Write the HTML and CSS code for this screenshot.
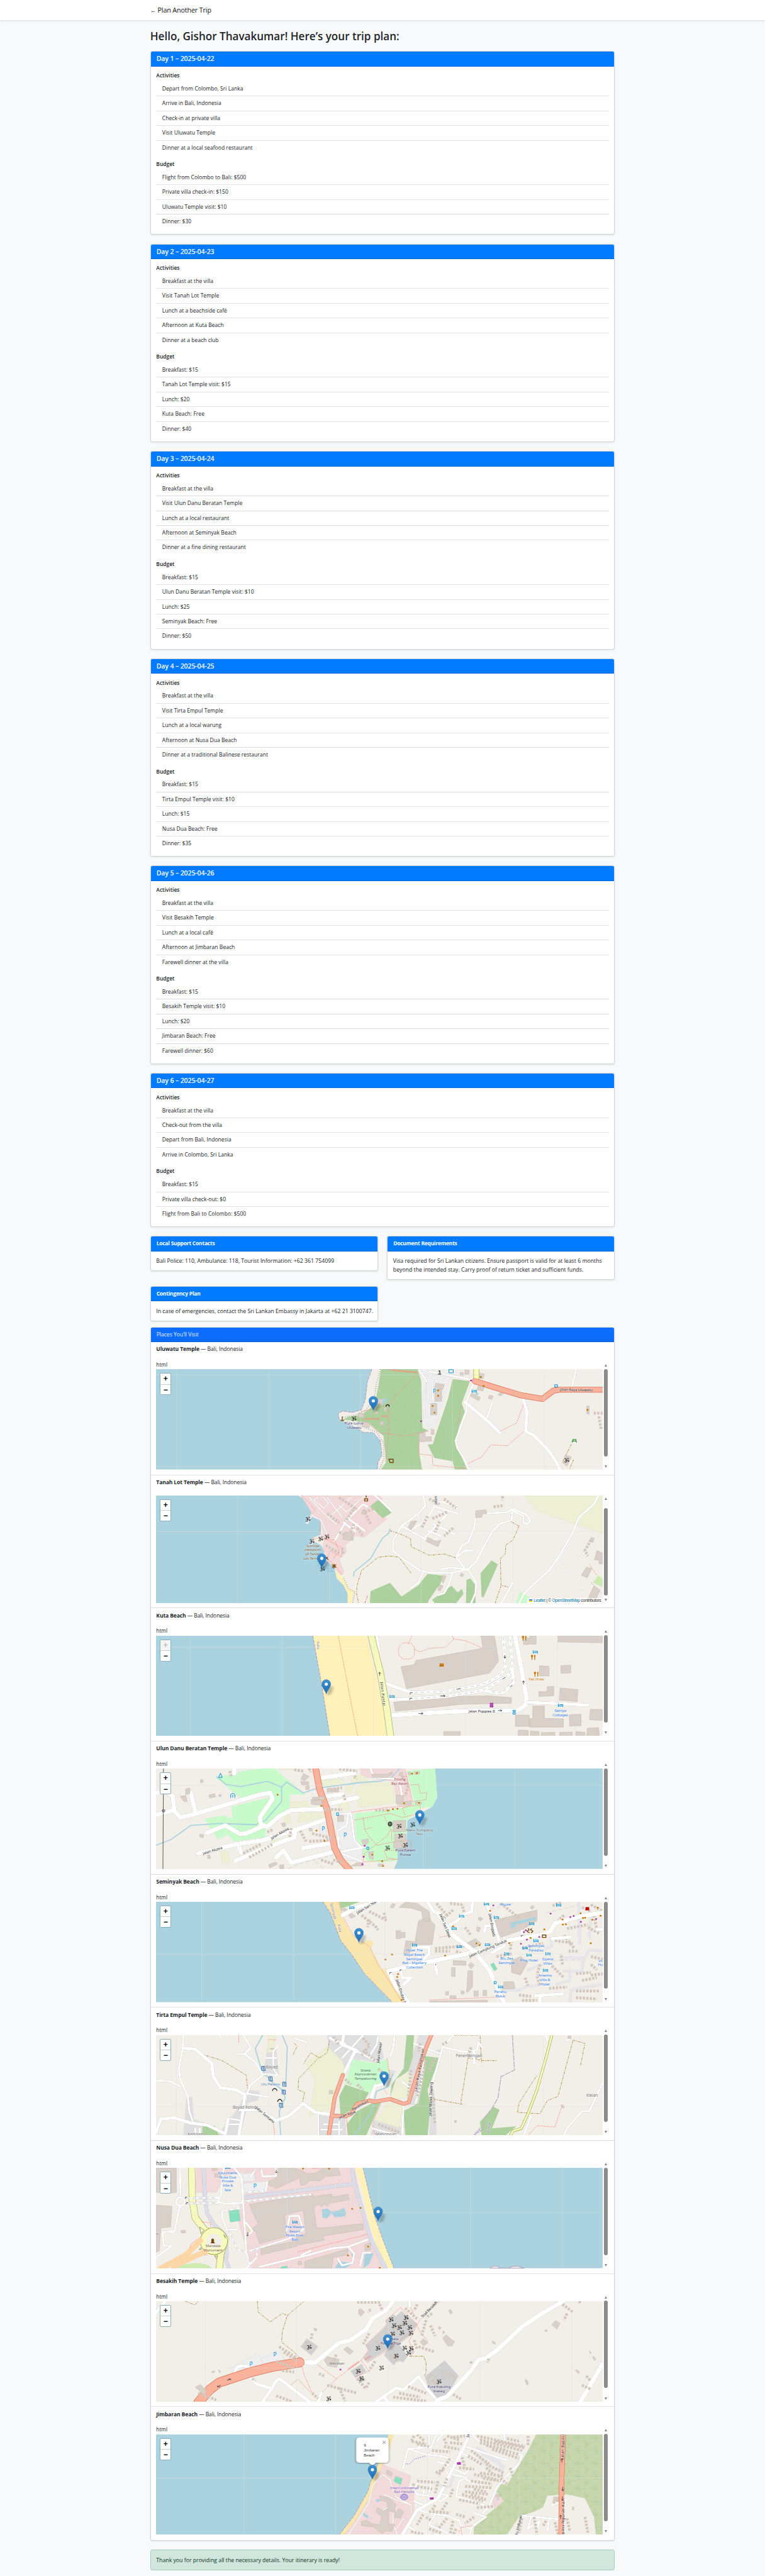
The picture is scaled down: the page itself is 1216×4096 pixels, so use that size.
FILE: index.html
```html
<!DOCTYPE html>
<html lang="en">
<head>
<meta charset="utf-8">
<title>Trip plan</title>
<link rel="stylesheet" href="styles.css">
</head>
<body>
<svg class="symbols" aria-hidden="true">
  <defs>
    <linearGradient id="pinfill" x1="0" y1="0" x2="0" y2="1"><stop offset="0" stop-color="#3f93d0"/><stop offset="1" stop-color="#1c6bb5"/></linearGradient>
    <pattern id="trees" width="62" height="150" patternUnits="userSpaceOnUse">
      <rect width="62" height="150" fill="#add19e"/>
      <path d="M10 20a4 8 0 1 1 7 0M14 22v14M21 34a3 6 0 1 1 5 0M24 34v14M40 95a4 8 0 1 1 7 0M44 97v14M51 109a3 6 0 1 1 5 0M54 109v14" fill="none" stroke="#8cbd84" stroke-width=".7"/>
    </pattern>
    <pattern id="swamp" width="58" height="96" patternUnits="userSpaceOnUse">
      <rect width="58" height="96" fill="#c8d7ab"/>
      <path d="M4 10h12M24 22h10M44 8h11M8 58h9M38 50h14M26 78h12M2 84h10M48 84h9" stroke="#62b0e6" stroke-width=".8"/>
      <path d="M12 42a5 11 0 1 1 6 0v-9M12 42h10M40 88a5 11 0 1 1 6 0v-9M40 88h10" fill="none" stroke="#8bb070" stroke-width=".9"/>
    </pattern>
    <g id="pin">
      <ellipse class="pin-shade" cx="9" cy="-24" rx="7" ry="36" transform="rotate(9)"/>
      <g transform="scale(1.33 3)"><path d="M0 0C-2-8-11-15-11-24.500A11 11 0 0 1 11-24.500C11-15 2-8 0 0Z" fill="url(#pinfill)" stroke="#2a76b4" stroke-width=".6"/><circle cy="-24" r="4" fill="#fff"/></g>
    </g>
    <g id="om"><path class="om" transform="scale(1.33 3)" d="M-5-4Q-1-6-1-2.500Q-1 0-3 0Q0 0 0 3Q-1 6.500-5.500 3.500M-1 0Q2-2 3 0Q3 4.500 5 3Q6.500 0 4-1M1-5Q3-3 5.500-5M3-6.500h.5"/></g>
    <g id="bed"><path class="bed" transform="scale(1.33 3)" d="M-5-4V4M-5 2H6V4M-2.500-1.500H6V1.500"/></g>
    <g id="fork"><path class="fork" transform="scale(1.33 3)" d="M-3.500-6V6M-5-6v4h3v-4M3.500-5V6M3-5h1v3h-1z"/></g>
    <g id="dam"><path class="dam" transform="scale(1.33 3)" d="M-5-5H4M-4-5V5M0-5V3M4-5V5M-3 5H6"/></g>
    <g id="parking"><text class="pk" transform="scale(1.33 3)" y="5">P</text></g>
  </defs>
</svg>

<nav class="topbar"><div class="wrap"><a class="brand"><span class="back">←</span> Plan Another Trip</a></div></nav>

<main class="wrap">
  <h1>Hello, Gishor Thavakumar! Here’s your trip plan:</h1>

  <section class="card day">
    <h2 class="head">Day 1 – 2025-04-22</h2>
    <div class="body">
      <h3>Activities</h3>
      <ul><li>Depart from Colombo, Sri Lanka</li><li>Arrive in Bali, Indonesia</li><li>Check-in at private villa</li><li>Visit Uluwatu Temple</li><li>Dinner at a local seafood restaurant</li></ul>
      <h3>Budget</h3>
      <ul><li>Flight from Colombo to Bali: $500</li><li>Private villa check-in: $150</li><li>Uluwatu Temple visit: $10</li><li>Dinner: $30</li></ul>
    </div>
  </section>
  <section class="card day">
    <h2 class="head">Day 2 – 2025-04-23</h2>
    <div class="body">
      <h3>Activities</h3>
      <ul><li>Breakfast at the villa</li><li>Visit Tanah Lot Temple</li><li>Lunch at a beachside café</li><li>Afternoon at Kuta Beach</li><li>Dinner at a beach club</li></ul>
      <h3>Budget</h3>
      <ul><li>Breakfast: $15</li><li>Tanah Lot Temple visit: $15</li><li>Lunch: $20</li><li>Kuta Beach: Free</li><li>Dinner: $40</li></ul>
    </div>
  </section>
  <section class="card day">
    <h2 class="head">Day 3 – 2025-04-24</h2>
    <div class="body">
      <h3>Activities</h3>
      <ul><li>Breakfast at the villa</li><li>Visit Ulun Danu Beratan Temple</li><li>Lunch at a local restaurant</li><li>Afternoon at Seminyak Beach</li><li>Dinner at a fine dining restaurant</li></ul>
      <h3>Budget</h3>
      <ul><li>Breakfast: $15</li><li>Ulun Danu Beratan Temple visit: $10</li><li>Lunch: $25</li><li>Seminyak Beach: Free</li><li>Dinner: $50</li></ul>
    </div>
  </section>
  <section class="card day">
    <h2 class="head">Day 4 – 2025-04-25</h2>
    <div class="body">
      <h3>Activities</h3>
      <ul><li>Breakfast at the villa</li><li>Visit Tirta Empul Temple</li><li>Lunch at a local warung</li><li>Afternoon at Nusa Dua Beach</li><li>Dinner at a traditional Balinese restaurant</li></ul>
      <h3>Budget</h3>
      <ul><li>Breakfast: $15</li><li>Tirta Empul Temple visit: $10</li><li>Lunch: $15</li><li>Nusa Dua Beach: Free</li><li>Dinner: $35</li></ul>
    </div>
  </section>
  <section class="card day">
    <h2 class="head">Day 5 – 2025-04-26</h2>
    <div class="body">
      <h3>Activities</h3>
      <ul><li>Breakfast at the villa</li><li>Visit Besakih Temple</li><li>Lunch at a local café</li><li>Afternoon at Jimbaran Beach</li><li>Farewell dinner at the villa</li></ul>
      <h3>Budget</h3>
      <ul><li>Breakfast: $15</li><li>Besakih Temple visit: $10</li><li>Lunch: $20</li><li>Jimbaran Beach: Free</li><li>Farewell dinner: $60</li></ul>
    </div>
  </section>
  <section class="card day">
    <h2 class="head">Day 6 – 2025-04-27</h2>
    <div class="body">
      <h3>Activities</h3>
      <ul><li>Breakfast at the villa</li><li>Check-out from the villa</li><li>Depart from Bali, Indonesia</li><li>Arrive in Colombo, Sri Lanka</li></ul>
      <h3>Budget</h3>
      <ul><li>Breakfast: $15</li><li>Private villa check-out: $0</li><li>Flight from Bali to Colombo: $500</li></ul>
    </div>
  </section>

  <div class="info">
    <section class="card note"><h2 class="head">Local Support Contacts</h2><p>Bali Police: 110, Ambulance: 118, Tourist Information: +62 361 754099</p></section>
    <section class="card note"><h2 class="head">Document Requirements</h2><p>Visa required for Sri Lankan citizens. Ensure passport is valid for at least 6 months<br>beyond the intended stay. Carry proof of return ticket and sufficient funds.</p></section>
    <section class="card note"><h2 class="head">Contingency Plan</h2><p>In case of emergencies, contact the Sri Lankan Embassy in Jakarta at +62 21 3100747.</p></section>
  </div>

  <section class="card places">
    <div class="head">Places You’ll Visit</div>

    <article class="place">
      <p class="name"><b>Uluwatu Temple</b> — Bali, Indonesia</p>
      <div class="frame"><div class="doc"><p>html</p><div class="map">
        <svg viewBox="29 0 1490 756" preserveAspectRatio="none">
          <g transform="translate(29 0) scale(1.017 1.2253) translate(-42 -929)">
            <path class="water" d="M42 929H750L735 1010 728 1120 715 1180 685 1195 655 1187 640 1200 642 1235 665 1262 700 1290 722 1318 755 1320 778 1370 783 1460 770 1500 768 1546H42Z"/>
            <path class="coast" d="M750 929L735 1010 728 1120 715 1180 685 1195 655 1187 640 1200 642 1235 665 1262 700 1290 722 1318 755 1320 778 1370 783 1460 770 1500 768 1546"/>
            <path class="cliff" d="M778 929L765 1020 758 1110 730 1180 700 1210 655 1225M670 1250L730 1290 765 1315 788 1380 790 1480 775 1546"/>
            <path class="wood" d="M780 929H900L912 1000 916 1290 935 1305 905 1330 905 1440 915 1546H780L797 1500 788 1340 745 1270 690 1245 655 1240 672 1222 712 1212 745 1170 765 1100Z"/>
            <path class="wood" d="M1015 990L1072 1002 1045 1140 1055 1190 1035 1290 1025 1400 1045 1470 1062 1546H1022L1015 1495 955 1475 933 1393 950 1390 960 1330 1000 1110Z"/>
            <path class="lot" d="M900 929L930 1010 922 1240 940 1300 960 1270 1000 1010 1010 980 940 950 960 929Z"/>
            <path class="road w2" d="M925 1000L922 1240 935 1295 958 1270 998 1010 950 1000 948 1130 925 1135M915 929L945 960 930 1010"/>
            <path class="road w4" d="M905 935L930 1005M940 945L1080 995M1145 1135L1126 1240M1420 929L1407 1035M1085 1010L1060 1130 1060 1190 1040 1290 1025 1370 1030 1410 1055 1490 1068 1546"/>
            <path class="road w6" d="M1055 1130L1130 1248 1170 1320M1245 1105L1259 1190 1255 1312 1280 1335 1330 1430 1355 1500 1367 1546"/>
            <path class="second-case" d="M1093 929V1000"/><path class="second" d="M1093 929V1000"/>
            <path class="trunk-case" d="M1088 1003L1160 1045 1240 1090 1310 1112 1345 1062 1365 1055H1520"/>
            <path class="trunk" d="M1088 1003L1160 1045 1240 1090 1310 1112 1345 1062 1365 1055H1520"/>
            <path class="foot" d="M790 929L900 950M900 955L835 1080 805 1150 715 1190 720 1240 775 1320 860 1340 935 1310M805 1150V1310L795 1500M1043 1150L1030 1280M1247 1150L1225 1260 1172 1310M1247 1315L1195 1400 1140 1395 1110 1470 1065 1510M905 1330V1450L948 1460 950 1520 1060 1540"/>
            <path class="foot wide" d="M815 935L900 950M728 1235H775M780 1218H803"/>
            <path class="track" d="M1405 1390L1375 1500M1412 1485L1398 1546"/>
            <path class="bld" d="M765 1110l25 5-4 35-20-5zM960 1015l28 10-5 28-28-12zM957 1052h22v75h-22zM943 1140h20v70h-20zM905 1320h20v55h-20zM928 1345h18v28h-18zM777 1250h12v22h-12zM705 1200l20 5-3 25-18-5zM715 1250l28 10-2 30-22-10zM945 1300h9v30h-9zM1078 1075l28 28-5 20-28-28zM1100 1030l20 8-6 25-20-8zM1135 1090l13 4-4 20-12-4zM1170 1072l12 5-8 16-10-5zM1055 935h14v25h-14zM1040 950h10v18h-10zM1105 955l14 4-4 30-12-4zM1455 1155l8 2v50l-8-5zM1385 1455l20 15-15 55-14-20zM760 1185h10v20h-10zM790 1165h8v22h-8z"/>
            <path class="brow" d="M1478 1200L1507 1200M1495 1220L1502 1300"/>
            <path class="pool" d="M788 1110l12-2-4 30-12 2zM1090 1075h10v12h-10z"/>
            <path class="poi" d="M967 1060h1M967 1093h1M949 1155h1M955 1197h1M1107 978h1M1116 1033h1M1457 1180h1"/>
            <path class="poi shop" d="M1075 999h1M911 1249h1"/>
            <path class="bluebox" d="M1003 932h14v20h-14zM1350 1025h9v14h-9z"/>
            <path class="darkpoi" d="M969 940h4v20M966 960h12M797 1160v-8l5-5 5 5v8"/>
            <path class="brownpoi" d="M648 1244h11M653 1220v20M806 1483h14v20h-10z"/>
            <path class="greenpoi" d="M1408 1361h13M1411 1361l-4 20M1418 1361l4 20M1406 1371h16"/>
            <path class="grid" d="M110 929V1546M412 929V1546M713 929V1546M1014 929V1546M1315 929V1546M42 964H1507M42 1528H1507"/>
            <text class="lb temple" transform="translate(692 1271) scale(1.31 2.450)">Pura Luhur<tspan x="0" dy="10.700">Uluwatu</tspan></text>
            <text class="lb" transform="translate(1420 1064) scale(1.31 2.450) rotate(1)">Jalan Raya Uluwatu</text>
            <text class="lb blue big" transform="translate(955 1074) scale(1.31 2.450)">P</text>
          </g>
          <use href="#bed" x="1090" y="165"/><use href="#om" x="689" y="374"/><use href="#om" x="1399" y="687"/><use href="#pin" x="754" y="311"/>
        </svg>
        <div class="zoomctl"><span>+</span><span>−</span></div></div></div>
        <div class="bar"><i class="up"></i><i class="thumb"></i><i class="down"></i></div></div>
    </article>

    <article class="place scrolled">
      <p class="name"><b>Tanah Lot Temple</b> — Bali, Indonesia</p>
      <div class="frame"><div class="doc"><div class="map">
        <svg viewBox="29 225 1490 813" preserveAspectRatio="none">
          <path class="water" d="M29 225H503L530 260 545 310 550 350 528 435 535 440 552 375 575 410 580 460 578 520 550 545 545 600 560 575 580 600 590 640 590 700 625 770 632 850 655 900 668 960 675 1038H29Z"/>
          <path class="res" d="M512 225H775L785 250 740 330 800 400 722 542 695 525 660 600 665 650 640 700 655 800 648 825 622 770 600 690 585 620 590 560 580 410 550 360Z"/>
          <path class="sand" d="M624 780L650 840 662 880 672 930 690 935 680 1038H668L668 960 655 900 635 850Z"/>
          <path class="cliff" d="M655 850L672 930 692 950 685 1038"/>
          <path class="farm" d="M1258 225H1519V510L1300 340Z"/>
          <path class="wood" d="M772 255L815 355 785 395 743 305ZM745 945L810 882 848 985 905 900 935 815 985 828 980 880 940 1010 935 1038H742ZM950 1010L1015 905 1035 955 1050 928 1055 965 1030 1038H960ZM1065 860L1078 850 1095 900V1038H1063ZM1112 810L1148 714 1170 742 1122 990 1115 990Z"/>
          <path class="park" d="M1245 945L1285 1010V1038H1228Z"/><path class="golf" d="M1505 825L1519 850V915L1487 880Z"/>
          <path class="stream" d="M810 475L805 510 785 545 765 620 745 700 690 800 688 835"/>
          <path class="road w2" d="M540 240L585 350 630 440M570 240L555 260 590 320 605 280 585 235M600 240L650 390M545 375L580 410 600 520M605 390L680 240M640 300L665 350 725 225M1360 700L1440 850 1450 1038M1370 720L1420 540 1475 620 1440 700 1455 710 1480 625 1519 640"/>
          <path class="road w4" d="M760 225L815 340M625 565L665 410 720 290 735 310M672 400L725 490M655 430L695 495M700 440L680 470M920 225L928 300 905 360 850 450 820 560 820 640 850 700 910 790 940 805 1015 808 1070 780 1098 720 1120 620 1150 500 1175 440 1215 410 1220 325M850 455L920 545 965 600M965 225L955 320 930 410 880 485M950 270L990 275 1035 325M960 310L1035 360M970 345L1000 365 925 545M955 440L1025 515M935 490L980 530M960 590L950 560 968 545M1135 360L1200 350 1220 325 1265 370 1278 415 1268 440 1255 430V380L1215 335M1095 400L1090 470 1070 580 1050 600 1030 690 1058 770M1030 690L1060 640 1085 638M980 780L1010 768 1065 780M920 800L905 880 880 920M1018 810L1005 900 990 960 970 975M1070 780L1097 880 1095 960 1080 1038M1220 880L1200 960 1180 1038M1505 225L1490 290 1440 390 1420 500 1380 660 1340 790 1290 890 1255 970 1240 1038"/>
          <path class="track" d="M810 490L850 520 878 550 880 610 940 675 990 665 1030 695M1240 455L1212 420M1240 455L1220 560 1195 600V660L1178 700 1180 900 1205 915M1180 905L1160 1038M880 810L840 690 805 680 770 690 715 790 700 900 698 960 705 1038M735 980L725 1038"/>
          <path class="foot" d="M515 225L545 290 560 340 535 400M578 420L575 510 600 560 650 620 648 690 610 640 600 700 630 760 648 820M550 545L625 560 640 640 620 700M1475 740L1500 830M1480 880L1515 960"/>
          <path class="brow" d="M695 310L660 420M640 240L700 330M720 330L745 440M715 360L760 320M690 440L665 560M640 500L690 560M700 470L720 530M595 600L640 660M650 620L655 670M940 250L975 290M990 250L1030 320M935 380L915 470M975 420L960 500M1000 350L950 400M1020 470L990 530M1185 230V260M1155 310L1190 300M600 360L640 430M1480 560L1460 640 1470 680"/>
          <path class="bld" d="M1095 340L1130 332 1132 362 1118 360 1116 388 1096 392ZM880 420l20-5-20 70-10-20zM935 540L965 570 980 560 970 610 930 570ZM660 500l30 10-10 55-28-12zM985 825l12 5-10 55-5-20zM975 895l12 10-10 40-8-8zM1500 640l19 20v80h-12v-30h-15zM1465 765l18 10-15 70-20-20zM1490 905l20 30-15 80-25-10zM1048 808l8 10-5 20-8-10zM1480 540l12 8-5 30-10-8z"/>
          <path class="brownpoi" d="M725 250h10v16h-10zM730 225v15M616 745l14 22M630 745l-14 22M623 740v35M596 690l8 20M590 705l12-15"/>
          <path class="ripple" d="M565 720H590M570 740H600M565 755H615M575 775H620M600 795H625"/>
          <path class="grid" d="M301 225V1038M608 225V1038M913 225V1038M1220 225V1038M29 496H1519"/>
          <text class="lb" transform="translate(966 260) scale(1.33 3) rotate(-88)">Jalan</text>
          <text class="lb brown" transform="translate(552 612) scale(1.33 3)">Sunrise<tspan x="0" dy="10.700">viewpoint</tspan><tspan x="0" dy="10.700">of Tanah</tspan><tspan x="0" dy="10.700">Lot Temple</tspan></text>
          <use href="#om" x="536" y="405"/><use href="#om" x="599" y="537"/><use href="#om" x="578" y="552"/><use href="#om" x="549" y="571"/><use href="#om" x="584" y="779"/><use href="#pin" x="582" y="770"/>
        </svg>
        <div class="zoomctl"><span>+</span><span>−</span></div>
        <div class="credit"><i></i><a>Leaflet</a> | © <a>OpenStreetMap</a> contributors</div></div></div>
        <div class="bar"><i class="up"></i><i class="thumb"></i><i class="down"></i></div></div>
    </article>

    <article class="place">
      <p class="name"><b>Kuta Beach</b> — Bali, Indonesia</p>
      <div class="frame"><div class="doc"><p>html</p><div class="map">
        <svg viewBox="29 234 1490 756" preserveAspectRatio="none">
          <path class="water" d="M29 234H552L575 520 590 720 609 990H29Z"/>
          <path class="sand" d="M552 234H730L760 500 785 760 797 990H609L590 720 575 520Z"/>
          <path class="coast" d="M552 234L575 520 590 720 609 990"/>
          <path class="foot" d="M637 234L658 480 680 740 702 990M883 234L870 300M1018 234L1022 260 995 320 940 330 910 355 890 335M1022 258L1060 270 1120 327M865 285Q892 290 892 350T865 410T838 350T865 285"/>
          <path class="bld" d="M1113 234H1158L1172 425 1142 515 865 632 846 467 890 452 896 420 1120 327ZM822 735L1040 690 1140 686 1215 700V742L1050 750 828 803ZM1370 234H1519V287L1370 280ZM1275 234H1297V297H1275ZM1255 250h17v50h-17zM1308 460l32 4v72h-32zM1380 458l33-2v58l-33 2zM1334 618l22-3v70l-50 6v-36h28zM1377 627l60 13-3 90-60-12zM1286 763h39v92l63 5v62H1275v-65h11zM1228 832h46v84h-46zM1408 828l39-3v86l-38 3zM1478 787l41 3v82l-44-6zM1468 930l38-3 2 63h-42zM1238 943l33 4v43h-34zM1278 952l29 4v34h-29zM1315 963l45-2v29h-47zM1376 961l42-2v31h-43zM1430 955l30 6v29h-31zM989 955h55v35h-55z"/>
          <path class="road w6" d="M798 595L880 662 990 655 1120 600 1180 530 1195 460 1187 234M810 715L880 710 1000 690 1120 645 1205 530 1218 460 1210 234M1218 480L1222 590 1185 665 1150 660 1118 640M765 234L772 340"/>
          <path class="dash-lane" d="M890 662L990 655 1120 600 1180 530 1195 460 1187 234M890 708L1000 690 1120 645 1205 530 1218 460 1210 234M1222 560L1185 665 1140 655"/>
          <path class="road w9" d="M1227 234L1245 450 1265 700 1262 755 1235 795 1050 802 930 815 820 832"/>
          <path class="road w6" d="M1268 735L1370 745 1470 756"/>
          <path class="second-case w11" d="M746 225L778 520 800 800 812 1000"/><path class="second w10" d="M746 225L778 520 800 800 812 1000"/>
          <path class="arrow" d="M775 535V510M771 520l4-12 4 12M1193 380v22M1189 392l4 12 4-12M1255 600v-25M1251 585l4-12 4 12M1045 632l-14 5M1185 560l10-12M1210 620l8-14M978 687h14M988 680l6 7-6 7M905 820h14M914 812l6 7-6 8M877 675v-12h8M876 717v-12h8"/>
          <path class="burger" d="M975 446h14M975 454h14M975 462h14"/>
          <path class="poi shop" d="M1145 745h1M1151 745h1M1145 757h1M1151 757h1M1145 768h1M1151 768h1"/>
          <use href="#fork" x="1258" y="253"/><use href="#fork" x="1288" y="397"/><use href="#fork" x="1298" y="524"/><use href="#bed" x="1294" y="355"/><use href="#bed" x="816" y="690"/><use href="#bed" x="1378" y="757"/>
          <path class="bluebox" d="M1220 795h8v10h-8zM1220 812h8v12h-8z"/>
          <path class="grid" d="M144 234V990M449 234V990M756 234V990M1062 234V990M1368 234V990M29 320H1519"/>
          <text class="lb admin" transform="translate(566 307) scale(1.33 3) rotate(86)">Kuta</text>
          <text class="lb spaced" transform="translate(782 675) scale(1.33 3) rotate(84)">Jalan Pantai</text>
          <text class="lb" transform="translate(1116 811) scale(1.33 3)">Jalan Poppies II</text>
          <path class="arrow" d="M1170 797h12M1178 790l5 7-5 7"/>
          <text class="lb food" transform="translate(1298 572) scale(1.33 3)">Fat chow</text>
          <text class="lb hotel" transform="translate(1378 807) scale(1.33 3)">Satriya<tspan x="0" dy="10.700">Cottages</tspan></text>
          <use href="#pin" x="597" y="671"/>
        </svg>
        <div class="zoomctl maxed"><span>+</span><span>−</span></div></div></div>
        <div class="bar"><i class="up"></i><i class="thumb"></i><i class="down"></i></div></div>
    </article>

    <article class="place">
      <p class="name"><b>Ulun Danu Beratan Temple</b> — Bali, Indonesia</p>
      <div class="frame"><div class="doc"><p>html</p><div class="map">
        <svg viewBox="29 231 1490 756" preserveAspectRatio="none">
          <path class="water" d="M960 231H1519V987H823L835 925V830L865 780 868 620 895 590 950 520 967 450Z"/>
          <path class="park" d="M425 231L470 320 528 430 475 425V530L445 600 395 650V750L290 780 270 730 235 765 190 610 255 585 285 610 280 520 350 480 405 450 400 420 310 450 228 300 320 250 385 231ZM865 250L960 231 967 450 950 520 910 530 865 620V770L835 830V925L780 940 735 930 700 840 690 570 850 530 890 480Z"/>
          <path class="res" d="M710 231H860L885 510 835 512 822 330 715 290Z"/>
          <path class="farm" d="M580 320L655 310V350L585 375ZM710 350L760 335 820 345 825 490 705 525 695 400ZM665 360L690 350 680 420 660 410ZM685 285L720 280 740 325 680 335ZM510 565H590V600L500 640ZM478 485L535 475 540 520 480 530ZM440 231H495V240H440ZM245 855H270L275 940 250 945ZM455 590L475 580 480 650 460 640ZM415 745L440 750 435 790 412 795ZM640 480L670 470 675 540 640 540Z"/>
          <path class="lot" d="M575 630L598 620V735H575ZM635 570L685 565 695 760 720 830 715 930 655 920 635 780Z"/>
          <path class="stream" d="M230 290L262 350 310 368 400 328 448 370 465 333 520 415 560 385 600 370 700 340 780 325 815 300 842 231M448 370V480L395 620 360 655 240 645 145 660 80 765 29 810"/>
          <path class="road w9" d="M29 415L60 405 85 440 90 550 110 600 150 580 380 425 410 415 418 460 375 600 380 660 400 670 440 590 480 545 590 535M29 580L90 545M170 870L300 800 380 775 500 690 600 610M200 715L260 660 310 725 330 720 390 660M295 925L400 825 490 750 495 690M520 830L620 790M430 900L455 850 480 940 620 860M600 500L700 450M600 440L650 425M585 300L690 265M145 415L160 560M290 231V270M305 810L312 865"/>
          <path class="road w4" d="M745 231L755 300 835 310 845 370 850 445M625 575L680 570 690 760M640 860L635 700 665 660 670 580M645 870L715 930M660 850L730 820M690 770L715 830 645 860"/>
          <path class="dash-lane" d="M470 985L520 940 620 885M560 930L590 987"/>
          <path class="trunk-case w10" d="M561 225L575 390 600 540 625 830 645 920 675 995"/><path class="trunk w9" d="M561 225L575 390 600 540 625 830 645 920 675 995"/>
          <path class="foot" d="M680 560L800 525 910 508 912 540 890 580 850 600 810 570 690 620M720 600L725 690 740 745 765 810 830 780 880 775V840L790 850 800 905 835 915 720 935 725 870 770 790 800 740 812 690 790 590M725 690L750 675M815 690L815 770M860 580L850 530 875 515M862 260L885 480 930 465 933 415 910 415 905 350 875 355M855 290H870"/>
          <path class="bld" d="M820 625l42-5v85l-42 5zM825 725h38v50h-38zM822 782h28v50h-28zM852 785h16v45h-16zM205 430l20-8 3 22-20 10zM240 425l8 5-4 15-6-5zM110 440l18-5 5 45-12-2zM128 385l14-5v40l-14 8zM178 315h8v22h-8zM748 275l50 0 20-20 0 20-20 25h-45zM520 270l20 20-15 35-12-10zM510 330h28v25h-22zM528 365l12-5v30h-12zM600 380l35 5 5 20-40 5zM550 450l40-10v25l-35 8zM545 465h35l5 45-38-10zM175 725l12 5v22l-12-5zM447 645l12-5 3 25-10 5zM200 885l8-3 3 25-9 3zM405 955l25-20 3 18-25 28zM440 960l15-5v30h-12zM540 680l10 3v22l-10-3zM635 585h20v45h-20zM840 265l12-5v30l-12-5zM858 480l22-5v25l-22 5zM830 430l25 5v70l-25-10zM895 482l20 3v15h-20zM870 262h12v15h-12zM890 257l18-4v20l-15 4zM715 770l22-10v30l-15 30zM738 860l16-5v60l-12-5zM700 940h20v25h-40zM770 950h18v18h-18z"/>
          <path class="brow" d="M490 240L520 250M540 231L545 260M640 235L700 250M655 430L660 470M610 390L650 375M590 540H650M760 545H810M320 870L380 800M340 900L420 800M400 710L420 690M480 680L475 750M510 700L530 780M550 720L620 760M540 780L610 770M275 250L280 290M690 290L700 310M870 360L860 440M620 920L650 940M580 920L620 950M850 290L865 340"/>
          <path class="poi" d="M434 429h1M580 513h1M564 699h1M591 777h1M883 270h1M899 266h1M906 490h1M856 493h1M803 548h1M819 537h1M834 534h1M750 880h1M783 929h1M786 965h1"/>
          <path class="poi shop" d="M725 814h1M721 896h1M717 953h1"/>
          <path class="bluebox" d="M631 566h7v18h-7zM732 823h7v17h-7z"/>
          <path class="bed" d="M238 298l6-32 6 32zM278 452v-25l7-10 7 10v25M285 430v20"/>
          <path class="arrow" d="M54 231L52 987M50 543h8v14h-8z"/>
          <ellipse class="wheel" cx="810" cy="649" rx="6" ry="15"/>
          <path class="wheel" d="M804 649H816M810 634V664"/>
          <path class="grid" d="M307 231V987M613 231V987M920 231V987M1226 231V987M29 358H1519"/>
          <text class="lb" transform="translate(444 728) scale(1.33 3) rotate(-30)">Jalan Akasia</text>
          <text class="lb" transform="translate(219 858) scale(1.33 3) rotate(-17)">Jalan Akasia</text>
          <text class="lb resort" transform="translate(842 321) scale(1.33 3)">Enjung<tspan x="0" dy="10.700">Beji Resort</tspan></text>
          <text class="lb grey" transform="translate(908 704) scale(1.33 3)">Meru Tumpang<tspan x="0" dy="10.500">Telu</tspan></text>
          <text class="lb temple" transform="translate(861 858) scale(1.33 3)">Pura Dalem<tspan x="0" dy="10.700">Purwa</tspan></text>
          <use href="#parking" x="587" y="685"/><use href="#parking" x="660" y="730"/>
          <use href="#om" x="840" y="667"/><use href="#om" x="885" y="656"/><use href="#om" x="844" y="740"/><use href="#om" x="861" y="809"/><use href="#om" x="801" y="831"/><use href="#pin" x="909" y="653"/>
        </svg>
        <div class="zoomctl"><span>+</span><span>−</span></div></div></div>
        <div class="bar"><i class="up"></i><i class="thumb"></i><i class="down"></i></div></div>
    </article>

    <article class="place">
      <p class="name"><b>Seminyak Beach</b> — Bali, Indonesia</p>
      <div class="frame"><div class="doc"><p>html</p><div class="map">
        <svg viewBox="29 228 1490 756" preserveAspectRatio="none">
          <path class="water" d="M29 228H586L610 310 645 520 680 620 725 770 817 984H29Z"/>
          <path class="sand2" d="M586 228H638L650 340 680 460 710 540 745 515 755 540 745 580 765 660 780 735 797 730 805 790 860 984H817L725 770 680 620 645 520 610 310Z"/>
          <path class="coast" d="M586 228L610 310 645 520 680 620 725 770 817 984"/>
          <path class="wood" d="M640 228H710L645 280Z"/>
          <path class="foot" d="M637 228L655 350 690 490 742 565 770 700 800 800 850 984M975 495L1010 483M940 968L1170 945"/>
          <path class="greyroad" d="M1160 890L1240 895 1260 870 1320 850M1410 984L1415 890 1519 850M1380 650L1460 650 1475 590 1519 600M1330 580L1350 560 1345 500M1480 350L1475 500M1365 850L1410 820V740M1440 240L1443 540M1270 740L1320 700M1390 750H1450L1455 650"/>
          <path class="dash-lane" d="M1330 310L1440 255M1350 672L1450 665M1145 280L1220 240M655 330L700 280"/>
          <path class="bld" d="M830 445h15v12h15v40h-15v8h-15zM905 370l30-20 25 50-10 150h-70l-5 70h-20l8-100 30 10zM860 231L900 240 940 300 945 370 920 375 915 300 880 275 840 270ZM1160 365L1300 290V370L1250 440 1180 495 1160 420ZM1065 540l30-35 20 40-35 40zM1020 670v35h43v-30zM1070 705l10-22 10 22-10 28zM1015 725h12v65h-12zM1070 747h15v120l-15 40h-5zM1190 830h32l5 50-40 5zM1215 670l30-30 25 40-25 100-30-20zM645 285l15-8 35 60-15 15-15-40zM818 240l10 8-8 28-10-8zM995 905h10v25h-10zM1047 900h10v22h-10zM1090 900h14v40h-14zM1120 895h12v40h-12zM1010 935h20v20h-20zM945 975L1135 968V984H940ZM1283 255l8 10-6 20-8-12zM1108 340l12 15-8 18-8-12zM1100 415l12 10-6 30-8-12z"/>
          <path class="brow" d="M715 330L770 430M740 300L800 370M740 360L735 420M790 310L795 370M760 410L770 440M965 240L1000 330M1010 240L1050 250M1060 330L1050 250M1020 290L990 350M1180 240L1240 350M1165 640L1215 620M1150 590L1140 540M1215 520L1210 600M1240 500L1300 480M1250 580L1320 540M1390 480L1425 580M1360 520L1420 540M1310 700L1300 780M1350 710L1390 800M1260 800L1270 860M1300 790L1310 860M1385 700L1380 620M1405 600L1440 600M1400 430L1470 400M1480 250L1519 300M1490 330L1500 440M1450 270L1480 300M1470 420L1510 470M1430 770L1480 760M1480 780L1519 770M1450 820L1500 800M1340 880L1400 870M1240 930L1280 940M1430 900L1510 900M1430 950L1500 960M1250 970L1300 970M1390 330L1370 370M1480 640L1519 660M1480 700L1500 740M1380 230L1350 260M1060 420L1080 480M960 580L1060 560M1030 600L1050 620M960 600H1010"/>
          <path class="pool" d="M1213 385L1295 342 1297 362 1230 400 1228 420 1212 428Z"/>
          <path class="pitch" d="M1145 700L1155 688 1167 735 1158 748Z"/>
          <path class="road w6" d="M935 228L955 300 970 320M1085 228L1082 300 1050 330 1035 370 1003 410M1130 228L1150 350 1175 530M890 600L905 570 940 570V620L920 665 895 620M960 690L967 770M845 745L850 800 880 800 855 850M1125 450L1128 410 1145 405M1150 610L1190 560 1192 500M1295 935L1385 922M1310 935V984M1350 505L1410 495M1500 435H1519M1250 450V480"/>
          <path class="road w9" d="M652 328L700 270 770 225M970 315L1020 480 1090 600 1140 740 1190 984M805 750L930 685 1095 605 1130 590 1200 520 1320 475 1345 450 1360 390 1450 335 1519 310M805 750L830 870 870 984"/>
          <path class="poi" d="M816 625h1M794 663h1M993 633h1M1020 413h1M1098 541h1M1108 555h1M1143 296h1M1207 540h1M1278 500h1M1324 436h1M1385 362h1M1386 400h1M1396 397h1M1445 315h1M1453 350h1M1460 348h1M1502 272h1M1512 333h1M1479 540h1M836 773h1M833 794h1M848 967h1M1484 363h1"/>
          <path class="poi shop" d="M1154 255h1M1345 317h1M1411 343h1M1422 335h1M1446 379h1M1497 357h1M1266 513h1M1246 544h1M1307 492h1M1262 442h1M1256 456h1"/>
          <path class="redbox" d="M1462 268h12v24h-12z"/><path class="brownpoi" d="M1318 478h12v18h-12zM1270 430q8 8 0 14t5 16M1283 430q-8 8 0 14t-3 16"/>
          <path class="arrow" d="M809 772v-12h6M843 750v-10h6M1248 492v-12h6M962 695v10"/>
          <use href="#bed" x="682" y="271"/><use href="#bed" x="891" y="553"/><use href="#bed" x="1048" y="335"/><use href="#bed" x="1023" y="428"/><use href="#bed" x="1131" y="244"/><use href="#bed" x="1164" y="345"/><use href="#bed" x="1372" y="252"/><use href="#bed" x="1282" y="392"/><use href="#bed" x="1041" y="565"/><use href="#bed" x="1134" y="550"/><use href="#bed" x="1199" y="619"/><use href="#bed" x="1260" y="575"/><use href="#bed" x="1273" y="628"/><use href="#bed" x="1296" y="521"/><use href="#bed" x="1336" y="619"/><use href="#bed" x="1328" y="743"/><use href="#bed" x="1178" y="868"/>
          <path class="bluebox" d="M1157 828h7v18h-7z"/>
          <path class="grid" d="M181 228V984M489 228V984M794 228V984M1101 228V984M1407 228V984M29 622H1519"/>
          <text class="lb admin" transform="translate(616 300) scale(1.33 3) rotate(76)">Seminyak</text>
          <text class="lb admin" transform="translate(638 430) scale(1.33 3) rotate(76)">Kuta</text>
          <text class="lb" transform="translate(735 275) scale(1.33 3) rotate(-31)">Jalan Sari Nan</text>
          <text class="lb" transform="translate(990 412) scale(1.33 3) rotate(69)">Jalan Sari Dewi</text>
          <text class="lb" transform="translate(1146 405) scale(1.33 3) rotate(80)">Jalan Drupadi</text>
          <text class="lb" transform="translate(1138 588) scale(1.33 3) rotate(-23)">Jalan Camplung Tanduk</text>
          <text class="lb" transform="translate(842 905) scale(1.33 3) rotate(72)">Jalan Double S</text>
          <text class="lb hotel" transform="translate(891 602) scale(1.33 3)">Hotel The<tspan x="0" dy="10.800">Royal Beach</tspan><tspan x="0" dy="10.800">Seminyak</tspan><tspan x="0" dy="10.800">Bali - Mgallery</tspan><tspan x="0" dy="10.800">Collection</tspan></text>
          <text class="lb hotel" transform="translate(1194 255) scale(1.33 3)">House</text>
          <text class="lb hotel" transform="translate(1297 570) scale(1.33 3)">Seminyak<tspan x="0" dy="10.700">Paradiso</tspan></text>
          <text class="lb hotel" transform="translate(1199 666) scale(1.33 3)">Blu Zea<tspan x="0" dy="10.700">Seminyak</tspan></text>
          <text class="lb hotel" transform="translate(1273 677) scale(1.33 3)">Ping Hotel</text>
          <text class="lb hotel" transform="translate(1336 669) scale(1.33 3)">Dyana<tspan x="0" dy="10.700">Villas</tspan></text>
          <text class="lb hotel" transform="translate(1327 792) scale(1.33 3)">Artemis<tspan x="0" dy="10.700">Villa &amp;</tspan><tspan x="0" dy="10.700">Hotel</tspan></text>
          <text class="lb hotel" transform="translate(1178 917) scale(1.33 3)">Perahu<tspan x="0" dy="10.700">Biduk</tspan></text>
          <text class="lb hotel" transform="translate(1512 681) scale(1.33 3)">Vil<tspan x="0" dy="10.700">Ho</tspan></text>
          <use href="#pin" x="706" y="534"/>
        </svg>
        <div class="zoomctl"><span>+</span><span>−</span></div></div></div>
        <div class="bar"><i class="up"></i><i class="thumb"></i><i class="down"></i></div></div>
    </article>

    <article class="place">
      <p class="name"><b>Tirta Empul Temple</b> — Bali, Indonesia</p>
      <div class="frame"><div class="doc"><p>html</p><div class="map">
        <svg viewBox="29 228 1490 756" preserveAspectRatio="none">
          <path class="town" d="M600 228H770L790 400 765 440 710 410 670 470 650 500 640 400 605 330ZM400 320L430 330 440 530 385 540 395 400ZM330 640L375 650 370 720 335 740 330 800 310 984H235L260 900 295 800 320 700ZM130 700L150 690 155 860 205 900 180 984H120ZM570 830L660 850 665 984H570ZM755 870L850 920 850 984H745ZM905 228H940L930 400 915 760 870 750 870 480ZM940 600L960 700 965 984H940L945 760ZM800 480L830 500 800 590ZM990 330L975 380 950 350Z"/>
          <path class="farm" d="M600 315L650 420 665 520 640 540 610 780 540 840 560 570 530 440ZM855 510L885 530 870 700 810 710 820 640ZM800 740L855 755 840 925 760 870ZM405 228H425L420 360 400 360Z"/>
          <path class="park" d="M685 410L760 440 800 405 805 490 810 560 740 660 660 590Z"/>
          <path class="wood" d="M865 228H890L885 400 870 500 830 560 810 690 815 600 855 480ZM660 600L740 660 720 740 645 840 640 690ZM750 740L780 730 730 984H670L665 900 700 800ZM925 385L975 400 935 640 945 760 935 984H860L855 800 905 740 925 500ZM1155 768L1175 790 1150 930 1232 915 1195 984H1115L1110 880ZM185 915L225 910 240 984H182Z"/>
          <path class="stream" d="M385 228L360 330 380 480 410 570 450 640 460 700 440 800 445 984M450 228L467 320 462 600M820 520L800 620 765 650 745 820 690 984"/>
          <path class="track" d="M180 370L250 420 330 530 335 650M490 290L500 310 485 380M610 250L600 360 575 400 545 360 520 450M575 390L505 555 503 640 525 660 518 730M1025 228L1110 228 1115 440M1115 420H1165M1110 415L1070 400 1045 750M955 710L1055 750M1420 265L1460 290 1445 460M1420 270L1370 690 1335 720 1310 820 1235 810 1240 740 1300 530"/>
          <path class="foot" d="M305 228V290M405 260L430 265M420 880L425 984M800 400L810 560M780 740L750 900 760 984M1385 750L1360 920 1300 910 1270 984M665 850L670 984M790 640L800 670"/>
          <path class="boundary" d="M1218 228L1225 490 1180 540 1170 700 1150 780 1125 850 1120 940 1085 984"/>
          <path class="road w4" d="M120 228L118 330 105 480 110 560 135 690 140 800 155 900M320 228L345 320 325 370 360 430 385 530 345 600 330 680 320 800M300 370H330M435 310L420 350V480L435 530 390 520M395 400H430M29 570L75 575 110 615M325 665L405 695M240 228L245 240M490 250L530 280M610 250L760 420M770 240L765 300 740 390M625 350L660 290M825 228L820 330 810 390M890 290L980 370M1020 228L985 320 950 600 945 700M990 320L1060 355 1100 340 1105 280 1120 330M1090 350V440M920 430L915 580 895 740M720 228L650 400M855 750L850 984M750 930L840 984M1270 820L1280 840 1255 984M1519 590L1475 800 1450 800 1400 930 1390 984M1330 228L1335 270M1410 260L1400 265M760 600L745 700M850 580L880 630M570 830L570 984M580 940H650M640 880V984M590 900H640M270 855L310 870M275 900H305M160 930V984M175 930V984"/>
          <path class="road w6" d="M118 325L160 335 215 440 220 540 245 625 295 640 325 675 320 790 305 984M310 790L370 790 430 870 470 840 520 745 560 810 610 825M29 960L45 860 90 850 145 890 200 905 260 970 270 860M655 228L650 300 695 340 660 500M785 600L760 610 745 710M610 250L700 350"/>
          <path class="second-case w4b" d="M1350 225L1330 400 1300 640 1270 820 1248 930 1220 950 1210 990"/><path class="second w4" d="M1350 225L1330 400 1300 640 1270 820 1248 930 1220 950 1210 990"/>
          <path class="trunk-case w6b" d="M948 225L920 380 890 600 872 735 855 745 810 710 755 730 745 720 700 745 680 820 660 840 615 835M652 530L625 700 605 990"/><path class="trunk w6" d="M948 225L920 380 890 600 872 735 855 745 810 710 755 730 745 720 700 745 680 820 660 840 615 835M652 530L625 700 605 990"/>
          <path class="brow" d="M720 250L740 300M720 340L760 420M740 310L715 380M880 490L870 700M930 420L900 700M910 290L905 350M960 400L940 500M1000 280L985 300M1080 320L1070 390M950 640L960 900M770 900L840 960M620 240L640 300M700 600L720 640M660 560L680 600M770 480L790 520M805 520V560"/>
          <path class="bld" d="M1403 235h10v20h-10zM410 328h12v6h-12zM607 645h12v25h-12zM1025 870h6v16h-6zM1380 755l10 5v20l-8-8z"/>
          <path class="cave" d="M418 648v-8q7-20 14 0v8M435 730v-8q7-20 14 0v8"/>
          <use href="#dam" x="387" y="479"/><use href="#dam" x="411" y="557"/><use href="#dam" x="457" y="598"/><use href="#dam" x="455" y="657"/><use href="#dam" x="446" y="756"/>
          <path class="grid" d="M97 228V984M403 228V984M709 228V984M1016 228V984M1321 228V984M29 763H1519"/>
          <text class="lb place-lb" transform="translate(415 478) scale(1.33 3)">Bayad</text>
          <text class="lb place-lb" transform="translate(324 783) scale(1.33 3)">Bayad Kelod</text>
          <text class="lb place-lb" transform="translate(160 988) scale(1.33 3)">Kedisan</text>
          <text class="lb place-lb" transform="translate(796 984) scale(1.33 3)">Mancingan</text>
          <text class="lb place-lb" transform="translate(1073 396) scale(1.33 3)">Penendengan</text>
          <text class="lb place-lb" transform="translate(1484 690) scale(1.33 3)">Kikian</text>
          <text class="lb river" transform="translate(411 605) scale(1.33 3)">Ulu Petanu</text>
          <text class="lb green" transform="translate(728 501) scale(1.33 3)">Istana<tspan x="0" dy="10.700">Kepresidenan</tspan><tspan x="0" dy="10.700">Tampaksiring</tspan></text>
          <text class="lb spaced" transform="translate(912 490) scale(1.33 3) rotate(-80)">Jalan Raya Penelokan</text>
          <text class="lb" transform="translate(668 835) scale(1.33 3) rotate(-20)">Jalan Raya</text>
          <text class="lb" transform="translate(712 765) scale(1.33 3) rotate(-30)">Penelokan</text>
          <text class="lb" transform="translate(390 835) scale(1.33 3) rotate(40)">Jalan Sentanu</text>
          <text class="lb" transform="translate(778 360) scale(1.33 3) rotate(-82)">Jalan Mawar</text>
          <text class="lb" transform="translate(950 710) scale(1.33 3) rotate(-88)">Jalan Manik Tawang</text>
          <text class="lb admin" transform="translate(1100 970) scale(1.33 3) rotate(-50)">Gianyar</text>
          <text class="lb admin" transform="translate(1143 925) scale(1.33 3) rotate(-78)">Bangli</text>
          <use href="#pin" x="790" y="609"/>
        </svg>
        <div class="zoomctl"><span>+</span><span>−</span></div></div></div>
        <div class="bar"><i class="up"></i><i class="thumb"></i><i class="down"></i></div></div>
    </article>

    <article class="place">
      <p class="name"><b>Nusa Dua Beach</b> — Bali, Indonesia</p>
      <div class="frame"><div class="doc"><p>html</p><div class="map">
        <svg viewBox="29 225 1490 756" preserveAspectRatio="none">
          <path class="water" d="M720 225H1519V981H823L785 760 760 600 740 420Z"/>
          <path class="res" d="M165 225H690L700 330 740 720 800 981H350L335 860 305 640 310 500 330 410 305 290 250 300 245 350 230 410H160Z"/>
          <path class="land" d="M245 300L320 250V460L245 480Z"/>
          <path class="sand" d="M695 225H720L740 420 760 600 785 760 823 981H805L765 820 740 640 720 430Z"/>
          <path class="coast" d="M720 225L740 420 760 600 785 760 823 981"/>
          <path class="golf" d="M95 981Q120 945 160 943T215 981ZM333 645L345 690 338 710Z"/>
          <path class="lot" d="M318 270L355 262 360 325 320 330ZM320 340L400 325V405L320 415Z"/>
          <path class="bld" d="M29 225H97V410L80 415 29 410ZM29 507L82 515 78 670 45 678 40 850 29 860ZM340 500L550 420 555 440 615 423 618 445 670 424 673 465 610 490 600 515 590 495 582 520 570 500 555 525 565 680 600 675 660 660 720 645 722 690 585 740 590 770 505 805 497 745 530 720 520 545 458 580 465 740 375 795 360 700 345 690 370 650ZM440 225H480L510 240 535 270 560 265 590 225H635L645 280 595 290 575 325 540 320 530 350 512 358 508 300 430 380 425 370 405 355 404 330 430 300ZM225 270h20v25h-20zM500 775L380 830V880L500 815ZM525 930L670 835 668 880 620 900 615 981H525ZM112 697l14-2 2 18-14 3zM745 790l-20 15 2 45 18-8zM503 930l10-3 2 25-12 3zM215 225l15-3 5 20-18 5z"/>
          <path class="pool" d="M582 540L600 530 615 555 640 545 655 525 663 560 660 590 625 598 615 565 600 605 585 600ZM680 870L690 880 685 940 640 930 625 981H660L690 940ZM745 860L755 870 740 950 720 981 725 880Z"/>
          <path class="pitch" d="M272 552L305 540 310 622 277 634ZM443 981L450 970 467 965V981Z"/>
          <path class="path-lilac" d="M188 225L192 460 200 570 225 660 260 730 265 870 262 920 273 981M683 225L690 340 720 560 745 760 795 981M318 450L420 420 690 345"/>
          <path class="second-case w11" d="M148 220L150 460 160 600 190 690 215 720 260 760 245 870 240 990M195 690L190 800 235 870"/><path class="second w10" d="M148 220L150 460 160 600 190 690 215 720 260 760 245 870 240 990M195 690L190 800 235 870"/>
          <ellipse class="round-case" cx="222" cy="777" rx="35" ry="78"/><ellipse class="round" cx="222" cy="777" rx="35" ry="78"/>
          <path class="orange" d="M182 760L130 880 40 990M200 850L150 900 80 975"/>
          <path class="road w4" d="M109 225L111 440M109 510L90 705 50 710 55 810 80 815 29 900M255 225L245 430 235 480 260 495 315 490M290 225L315 300 320 500 330 850 345 981M315 480L545 425M130 490H235M130 455L235 450M320 525L250 550V600L265 690 300 690M270 690L300 840 330 860 470 760 520 690 505 585 475 590 465 700M365 840V900L330 981M330 640L350 700 335 740M380 240L385 290 430 285 428 225M400 330L395 400 325 410M345 290L360 240M375 970L540 880 620 830 670 820 735 765M515 880L545 850M670 820L690 870 685 940 650 960 635 910M710 960L720 865H745"/>
          <path class="dash-lane" d="M320 480L545 425M130 490H235M130 455L235 450M320 525L255 550M270 690L300 840 330 860 470 770M335 860L345 981M310 260L380 240M325 410L395 400M365 840V900"/>
          <ellipse class="rb" cx="110" cy="480" rx="14" ry="32"/>
          <path class="foot" d="M180 630L210 640 212 670M165 765L145 800 143 830M550 230H580M190 880H200M735 725L500 860"/>
          <path class="poi" d="M519 231h1M606 232h1M683 534h1M711 527h1M736 818h1M669 885h1M775 979h1"/>
          <path class="arrow" d="M430 240V262M426 254l4 10 4-10M335 710v28M331 730l4 10 4-10M255 728l6 25M127 458v-12h6M130 500v-12h6"/>
          <path class="tri" d="M175 670l15 25-12 25zM225 890h10l-5 20zM180 825l-8 15h8z"/>
          <path class="brownpoi" d="M212 790h13M218 757v30M215 765h6v20h-6z"/>
          <path class="landc" d="M1143 981Q1150 962 1168 965L1175 981H1205Q1215 965 1235 965L1258 981Z"/>
          <use href="#bed" x="268" y="222"/><use href="#bed" x="492" y="633"/><use href="#parking" x="359" y="360"/>
          <path class="grid" d="M160 225V981M467 225V981M772 225V981M1079 225V981M1385 225V981M29 562H1519"/>
          <text class="lb hotel" transform="translate(268 272) scale(1.33 3)">Kayumanis<tspan x="0" dy="10.700">Nusa Dua</tspan><tspan x="0" dy="10.700">Private</tspan><tspan x="0" dy="10.700">Villa &amp;</tspan><tspan x="0" dy="10.700">Spa</tspan></text>
          <text class="lb hotel" transform="translate(492 679) scale(1.33 3)">The Westin<tspan x="0" dy="10.700">Resort</tspan><tspan x="0" dy="10.700">Nusa Dua,</tspan><tspan x="0" dy="10.700">Bali</tspan></text>
          <text class="lb brown" transform="translate(219 822) scale(1.33 3)">Mandala<tspan x="0" dy="10.700">Monument</tspan></text>
          <text class="lb grey" transform="translate(33 730) scale(1.33 3)">n</text>
          <use href="#pin" x="770" y="626"/>
        </svg>
        <div class="zoomctl"><span>+</span><span>−</span></div></div></div>
        <div class="bar"><i class="up"></i><i class="thumb"></i><i class="down"></i></div></div>
    </article>

    <article class="place">
      <p class="name"><b>Besakih Temple</b> — Bali, Indonesia</p>
      <div class="frame"><div class="doc"><p>html</p><div class="map">
        <svg viewBox="29 237 1490 756" preserveAspectRatio="none">
          <path class="precinct" d="M848 312L900 410 875 500 840 560 870 650 852 700 838 680 822 720 790 645 800 600 733 697 720 665 738 610 728 570 775 470 785 450 800 410 795 380 820 335 830 350ZM532 517L570 578 547 645 511 580ZM715 708L730 765 695 815 678 765ZM715 795L730 830 712 853 698 820ZM992 685L1039 800 1000 950 960 975 940 900 925 805ZM875 570L890 620 875 650ZM475 975L485 993H470Z"/>
          <path class="lot" d="M275 745L367 628 392 715 330 760 290 795ZM378 672L440 605 465 695 385 720Z"/>
          <path class="track" d="M367 237L370 320 410 393 450 330 467 345 450 470 448 545 490 620 512 675M467 345L523 237M127 237L158 265 170 240M875 652H922L930 700V780L922 805"/>
          <path class="foot" d="M975 237L905 390 873 540 890 620 878 655M845 285L895 400 910 470 938 540M845 285L795 385 800 410 728 570 740 600 715 680 632 820 580 930M733 700L800 610 870 480 900 400M568 715L630 822M515 730L525 800 550 930M480 865L503 825 545 925M712 680L740 765 690 810M875 270L890 340M820 250L810 300"/>
          <path class="foot wide" d="M745 650L725 680M705 695L670 750"/>
          <path class="road w6" d="M60 237L29 325M875 237V272M345 820L365 860 415 895 385 993M415 900L425 850 440 820 540 993M580 930L570 993M765 993L830 890 855 905 905 805 935 900 965 980M293 790Q290 725 320 725T335 770M790 950L800 993"/>
          <path class="road w9" d="M820 237L800 300 750 370 730 450 675 535 640 550 560 700 520 697M1388 237L1320 325 1250 430 1170 600 1130 665 1105 680 1080 760 1035 870 1000 955 965 985M1519 710L1470 900 1445 993"/>
          <path class="trunk-case w14b" d="M508 698L420 730 340 775 240 850 210 900 170 1000"/><path class="trunk w14" d="M508 698L420 730 340 775 240 850 210 900 170 1000"/>
          <path class="bld" d="M705 300l8-5 12 25-12 28-8-15zM1350 415l12-32 15 20-10 45zM985 515l12-25 20 40 8 10-8 35h-14zM910 545l12-25 15 30-15 25zM655 600l12-20 20 35-12 25zM1005 305l8-3 5 20-6 15zM555 440l10 5 2 10-8 8zM1150 538l8 5 4 20-8-8zM1260 830l6 0 6 25-6 15zM1485 655l8 5 4 15-6 8zM1428 758l6-5 8 20-4 10zM1330 450l5 10-5 8-5-10zM215 770l8-10 3 8-8 12zM237 752l8 15-4 10zM945 790l15 20-18 45-5-20zM985 770l12 30-10 25zM590 680l10-25 40 20-8 60-30-10zM975 425l5 12-5 15-5-15zM987 460l6 12-8 12zM160 885l18-20 20 55-10 20zM1475 615l6 8-3 10z"/>
          <path class="brow" d="M700 245H780M860 290L900 370M900 260L890 310M930 380L915 500M950 330L930 360M945 420L960 500M740 480L720 560M745 300L735 320M775 260L785 310M550 480L545 530M440 580L495 660M455 620L500 690M450 760L490 770M630 640L620 700M590 800L570 780M905 580L960 620M890 530L900 600M760 690L740 760M700 820L730 900M740 850L730 890M600 870L700 930M640 890L660 990M550 930L570 970M430 950L480 993M820 960L930 990M840 930L910 960M870 880L930 930M1020 940L1050 980M1385 260L1420 320M1400 330L1390 380M1440 237L1445 250M1450 870L1480 900M1465 800L1480 840M1140 670L1135 700M1080 690V710M350 820L360 840M170 930L230 980M430 690L490 740M820 450L870 380M760 540L790 590M810 640L840 690M810 500V550M950 830L970 870M1010 780L1030 820M530 540V600M700 740L715 780"/>
          <path class="poi shop" d="M644 752h1"/>
          <path class="arrow" d="M266 834l12-10M270 824h8v8M245 870l-10 10M234 872v10h8"/>
          <text class="lb" transform="translate(944 305) scale(1.33 3) rotate(-46)">Trail Besakih</text>
          <text class="lb temple" transform="translate(812 532) scale(1.33 3)">Mandala<tspan x="0" dy="10.700">Padma Tiga</tspan></text>
          <text class="lb grey" transform="translate(632 715) scale(1.33 3)">Wantilan</text>
          <text class="lb temple" transform="translate(973 893) scale(1.33 3)">Pura Kiduling<tspan x="0" dy="10.700">Kreteg</tspan></text>
          <use href="#om" x="813" y="377"/><use href="#om" x="863" y="362"/><use href="#om" x="859" y="404"/><use href="#om" x="823" y="422"/><use href="#om" x="841" y="436"/><use href="#om" x="875" y="436"/><use href="#om" x="818" y="485"/><use href="#om" x="849" y="476"/><use href="#om" x="879" y="479"/><use href="#om" x="769" y="592"/><use href="#om" x="858" y="591"/><use href="#om" x="880" y="595"/><use href="#om" x="871" y="627"/><use href="#om" x="830" y="651"/><use href="#om" x="540" y="584"/><use href="#om" x="781" y="741"/><use href="#om" x="703" y="766"/><use href="#om" x="714" y="822"/><use href="#om" x="973" y="844"/><use href="#om" x="605" y="973"/>
          <use href="#parking" x="426" y="638"/><use href="#parking" x="346" y="710"/>
          <path class="grid" d="M192 237V993M498 237V993M804 237V993M1110 237V993M1416 237V993M29 740H1519"/>
          <use href="#pin" x="802" y="594"/>
        </svg>
        <div class="zoomctl"><span>+</span><span>−</span></div></div></div>
        <div class="bar"><i class="up"></i><i class="thumb"></i><i class="down"></i></div></div>
    </article>

    <article class="place">
      <p class="name"><b>Jimbaran Beach</b> — Bali, Indonesia</p>
      <div class="frame"><div class="doc"><p>html</p><div class="map">
        <svg viewBox="29 249 1490 756" preserveAspectRatio="none">
          <path class="water" d="M29 249H805L780 420 750 570 735 680 690 860 640 1005H29Z"/>
          <path class="sand2" d="M805 249H823L800 400 770 560 750 690 700 880 658 1005H640L690 860 735 680 750 570 780 420Z"/>
          <path class="coast" d="M780 420L750 570 735 680 690 860 640 1005"/>
          <path class="res" d="M785 475L880 562 870 640 890 700V820L850 1005H658L700 880 750 690 770 560ZM1165 690L1190 740 1170 800 1150 770Z"/>
          <path class="swamp" d="M1297 249H1519V1005H1497L1490 870 1460 730 1400 700 1335 710 1320 800 1290 830 1240 870 1200 1005H1088L1090 950 1130 860 1190 750 1165 680 1180 620 1200 630 1240 480 1270 370Z"/>
          <path class="greyroad" d="M1100 350L1170 450 1185 520 1140 500 1095 390M970 620L990 650 1010 640 1020 570M1120 400L1190 490M950 1005L965 930"/>
          <path class="road w2" d="M780 560L750 640 740 760 690 940 670 1005M785 550L810 590 815 640 830 720 880 780V840M790 700L830 740 880 780M820 760L830 800 820 850V930L835 1005M855 880L830 960M1480 880L1495 1005M800 750L820 760M780 830L800 800"/>
          <path class="road w4" d="M940 249V350L915 350 870 355 860 440 853 510M870 355L930 400 990 415 1030 450M965 249L945 350M985 249L965 300M1085 249L1100 290 1200 380 1245 400M1060 340L1180 430 1200 440M1050 390L1110 460M1010 500L1060 545 1070 520M1000 540L1065 575M1065 575L1040 600 1030 715 1085 750 1130 790M1090 620L1065 590M1250 400L1240 470 1200 560 1165 650 1140 790 1120 840M1250 860L1340 880 1380 890M1250 860L1230 1005M1280 870L1270 960 1310 900 1300 960M1340 880L1335 970M890 750L930 790M880 640L900 700 950 715M905 600L890 660M925 640L920 710M945 630L940 680M970 690L1005 710 980 750 960 735M870 940L910 1000M960 850L940 930 1000 990M1090 840L1130 870 1085 940 1075 1005M1040 890L1045 930 1080 960M970 455L1005 480 980 510M1350 780L1400 740M905 820L960 850 1000 860 1040 900M1190 249L1195 330"/>
          <path class="road w6" d="M1075 249L1055 350 1020 500 970 730 900 820 850 1005"/>
          <path class="bld" d="M775 710l30 15 25 50-5 60-20-10 0 100 20 0-10 55-20-5-10 20-15-20-15-30-40-10 0-30 15-10 20 25 25 10 8-60-20-40 5-30 20 25 15-20-5-50-20-10zM825 840l15-30 15 20-10 50-20-5zM800 515l18 25-4 25-18-25zM1355 720h18v30h-18zM1418 795h5v22h-5zM1165 700l12 5-3 18-12-5z"/>
          <path class="brow" d="M890 260L880 300 930 320M900 249L925 300M1000 260L1040 290M1010 310L1050 320M990 340L1040 360M950 370L1010 380M1100 260L1260 340M1110 290L1250 370M1130 330L1240 400M1150 360L1240 430M1080 370L1140 470M1070 410L1120 480M1130 470L1190 540M1050 420L1060 500M1110 540L1190 560M1080 600L1150 620M1060 640L1150 650M1060 680L1140 700M1090 550L1170 590M1000 580L990 640M900 600L960 610M890 620L880 680M1010 430L970 560M990 510L960 540M1040 500L1090 510M1040 740L1110 770M1050 700L1120 750M1000 760L980 830M940 830L1010 840M920 850L900 930M930 870L950 900M1000 880L970 960M1020 900L1010 1000M940 960L980 990M880 980L920 1000M1090 870L1060 920M1100 800L1160 790M1210 500L1220 560M1170 560L1200 620M1250 880L1240 990M1290 870L1300 1000M1330 900L1320 940M1380 730L1350 770M1400 880L1410 980M1360 910L1370 1000M1270 260V330M1200 280L1240 300M970 600L960 700M1020 660L1010 720M1460 870L1470 990M1030 850L1060 870"/>
          <path class="brow" d="M900 320L940 340M1020 270L1060 260M990 280L1000 330M1110 310L1200 370M1160 300L1260 350M1130 500L1160 560M1090 660L1130 680M1080 700L1130 740M1120 580L1180 600M960 780L950 820M1030 960L1020 1005M900 640L950 660"/>
          <path class="pool" d="M762 740l12-5 2 18-10 5zM720 838l18 25-2 20-15-20zM742 875l8 0-2 10zM1165 730l8 0-2 20z"/>
          <path class="pitch" d="M828 566L850 580 845 627 823 600Z"/>
          <path class="foot" d="M1085 935L1045 950 1050 1005M1040 970V990"/>
          <path class="bluedots" d="M927 412L890 435 875 470H860"/>
          <path class="trunk-case w8b" d="M1388 240L1382 620 1380 1010"/><path class="trunk w8" d="M1388 240L1382 620 1380 1010"/>
          <path class="arrow" d="M1383 460V430M1379 442l4-12 4 12M1386 645v30M1382 662l4 12 4-12M1385 715v32M1381 735l4 12 4-12M1379 885v-28M1375 868l4-12 4 12"/>
          <path class="shopbox" d="M1032 460l14-4v20h-12zM942 725l13-4v18h-12z"/>
          <ellipse class="heli" cx="857" cy="720" rx="12" ry="22"/>
          <path class="grid" d="M322 249V1005M628 249V1005M935 249V1005M1241 249V1005M29 577H1519"/>
          <text class="lb" transform="translate(1074 261) scale(1.33 3) rotate(-75)">Ja</text>
          <text class="lb heli-lb" transform="translate(857 659) scale(1.33 3)">InterContinental<tspan x="0" dy="10.700">Bali Helipad</tspan></text>
          <text class="lb heli-lb" transform="translate(857 731) scale(1.33 3)">H</text>
          <text class="lb spaced" transform="translate(1390 337) scale(1.33 3) rotate(-89)">Jalan Bypass</text>
          <text class="lb spaced" transform="translate(1391 890) scale(1.33 3) rotate(-89)">Bypass Ngurah Rai</text>
          <text class="lb" transform="translate(1242 940) scale(1.33 3) rotate(-76)">atu Jimbaran</text>
          <path class="bubble" d="M710 272H792Q805 272 805 295V438Q805 462 792 462H762L751 485 740 462H710Q697 462 697 438V295Q697 272 710 272Z"/>
          <text class="tip" transform="translate(722 337) scale(1.33 3)">9.<tspan x="0" dy="12.700">Jimbaran</tspan><tspan x="0" dy="12.700">Beach</tspan></text>
          <path class="close" d="M785 298l10 20M795 298l-10 20"/>
          <use href="#pin" x="751" y="586"/>
        </svg>
        <div class="zoomctl"><span>+</span><span>−</span></div></div></div>
        <div class="bar"><i class="up"></i><i class="thumb"></i><i class="down"></i></div></div>
    </article>
  </section>

  <div class="alert">Thank you for providing all the necessary details. Your itinerary is ready!</div>
</main>
</body>
</html>
```
FILE: styles.css
```css
/* --u is one design pixel; every measure is a multiple of it */
:root { --u: 0.63333px; }
* { box-sizing: border-box; margin: 0; padding: 0; }
body {
  background: #f8f9fb;
  color: #212529;
  font-family: "Open Sans", "Noto Sans", sans-serif;
  font-size: calc(13.5 * var(--u));
  line-height: calc(21 * var(--u));
  letter-spacing: 0.003em;
}
.symbols { position: absolute; width: 0; height: 0; }
.wrap { width: calc(1166 * var(--u)); margin: 0 auto; }
.topbar { height: calc(50.5 * var(--u)); background: #fff; box-shadow: 0 1px 3px rgba(0,0,0,.13); }
.brand { display: block; line-height: calc(51 * var(--u)); font-size: calc(16.9 * var(--u)); letter-spacing: -0.01em; color: #111; }
.back { font-family: "Liberation Sans", sans-serif; font-size: calc(14.5 * var(--u)); }
h1 {
  height: calc(78 * var(--u));
  padding-top: calc(20 * var(--u));
  line-height: calc(42 * var(--u));
  font-size: calc(27 * var(--u));
  letter-spacing: 0;
  font-weight: 600;
}

.card {
  background: #fff;
  border: 1px solid #d3d4d6;
  border-radius: calc(5 * var(--u));
  box-shadow: 0 1px 3px rgba(0,0,0,.1);
  overflow: hidden;
}
.head {
  height: calc(37 * var(--u));
  padding: 0 calc(14 * var(--u));
  line-height: calc(36 * var(--u));
  background: #007bff;
  border-bottom: 1px solid #0067d6;
  color: #fff;
}
.day { margin-bottom: calc(22.4 * var(--u)); height: calc(498.100 * var(--u)); }
.day:nth-of-type(1) { height: calc(461.100 * var(--u)); }
.day:nth-of-type(6) { height: calc(387.100 * var(--u)); }
.day .head { font-size: calc(16.7 * var(--u)); font-weight: 600; letter-spacing: -0.012em; }
.day .body { padding: calc(13.2 * var(--u)) calc(13.5 * var(--u)) 0; }
h3 { height: calc(24.8 * var(--u)); line-height: calc(18 * var(--u)); font-size: calc(13.3 * var(--u)); font-weight: 600; }
ul { list-style: none; margin-bottom: calc(13 * var(--u)); }
li { height: calc(37 * var(--u)); line-height: calc(37 * var(--u)); padding-left: calc(15 * var(--u)); border-bottom: 1px solid #dee2e6; }
li:last-child { border-bottom: 0; }

.info { display: grid; grid-template-columns: 1fr 1fr; column-gap: calc(23 * var(--u)); row-gap: calc(16 * var(--u)); align-items: start; margin-bottom: calc(14.8 * var(--u)); }
.note .head { font-size: calc(13.4 * var(--u)); font-weight: 700; letter-spacing: -0.025em; }
.note p { padding: calc(15.2 * var(--u)) 0 calc(12 * var(--u)) calc(13.5 * var(--u)); font-size: calc(13.8 * var(--u)); letter-spacing: 0; white-space: nowrap; }

.places .head { height: calc(36.2 * var(--u)); background: #0d6efd; border-bottom-color: #0b62e0; color: #e4efff; }
.place { height: calc(334.200 * var(--u)); padding: calc(8.5 * var(--u)) calc(13.5 * var(--u)) 0; border-bottom: 1px solid #dee2e6; }
.place:last-child { border-bottom: 0; }
.name { height: calc(42 * var(--u)); letter-spacing: -0.012em; }
.frame { display: flex; height: calc(270 * var(--u)); }
.doc { width: calc(1121 * var(--u)); height: 100%; }
.doc p { height: calc(18 * var(--u)); line-height: calc(14 * var(--u)); font-size: calc(13 * var(--u)); }
.map { position: relative; height: calc(252 * var(--u)); background: #f2efe9; overflow: hidden; }
.map svg { display: block; width: 100%; height: 100%; }
.bar { width: calc(15 * var(--u)); background: #fcfcfc; display: flex; flex-direction: column; align-items: center; padding: calc(5 * var(--u)) 0 calc(4.5 * var(--u)); }
.up, .down { border: solid transparent; border-width: 0 calc(4.5 * var(--u)); }
.up { border-bottom: calc(7 * var(--u)) solid #888; margin-bottom: calc(6 * var(--u)); }
.down { border-top: calc(7 * var(--u)) solid #888; margin-top: auto; }
.thumb { width: calc(9 * var(--u)); height: calc(219 * var(--u)); border-radius: calc(5 * var(--u)); background: #8b8b8b; }
.scrolled .frame { height: calc(271 * var(--u)); }
.scrolled .map { height: 100%; }
.scrolled .up { margin-bottom: calc(21 * var(--u)); }

.zoomctl { position: absolute; left: calc(9.5 * var(--u)); top: calc(9.5 * var(--u)); width: calc(28.5 * var(--u)); height: calc(55.5 * var(--u)); border: 1px solid #8baeb9; border-radius: 2px; background: #fff; display: flex; flex-direction: column; }
.zoomctl span { flex: 1; text-align: center; font: bold calc(19 * var(--u))/calc(26 * var(--u)) "Liberation Sans", sans-serif; color: #000; }
.zoomctl span:first-child { border-bottom: 1px solid #ccc; }
.zoomctl.maxed span:first-child { background: #f4f4f4; color: #bbb; }
.credit { position: absolute; right: 0; bottom: 0; padding: 0 calc(4.5 * var(--u)); background: rgba(255,255,255,.8); font: calc(10.8 * var(--u))/calc(12.6 * var(--u)) "Liberation Sans", sans-serif; letter-spacing: -0.045em; white-space: nowrap; color: #333; }
.credit a { color: #0078a8; }
.credit i { display: inline-block; width: calc(9 * var(--u)); height: calc(6 * var(--u)); margin-right: calc(3 * var(--u)); background: linear-gradient(#4c7be1 50%, #ffd500 50%); }

.alert { margin-top: calc(22.5 * var(--u)); height: calc(52 * var(--u)); padding: 0 calc(13.5 * var(--u)); line-height: calc(51 * var(--u)); font-size: calc(13.8 * var(--u)); letter-spacing: 0; background: #d1e7dd; border: 1px solid #a3cfbb; border-radius: calc(5 * var(--u)); color: #0a3622; }

/* map drawing */
svg path, svg ellipse { vector-effect: non-scaling-stroke; }
.water, .pool { fill: #aad3df; }
.land { fill: #f2efe9; }
.landc { fill: #f2efe9; stroke: #a99abf; }
.wood { fill: url(#trees); }
.swamp { fill: url(#swamp); }
.park { fill: #c8facc; }
.golf { fill: #cdebb0; }
.farm { fill: #eef0d5; stroke: #dfe2c0; stroke-width: .5; }
.res { fill: #f2dada; stroke: #e6c8c8; stroke-width: .5; }
.town { fill: #e0dfdf; }
.precinct { fill: #d0d0d0; }
.pitch { fill: #88e0be; stroke: #6fc9a5; stroke-width: .5; }
.sand { fill: #fff1ba; }
.sand2 { fill: #f8e6ae; }
.lot { fill: #eeeeee; stroke: #ddd3d3; stroke-width: .5; }
.bld { fill: #d9d0c9; stroke: #c6b8ad; stroke-width: .6; }
.brow { fill: none; stroke: #d3c6bc; stroke-width: 4.5; stroke-dasharray: 3.500 2; }
.coast { fill: none; stroke: #a79abc; stroke-width: 1; stroke-dasharray: 5 1.5; }
.cliff { fill: none; stroke: #aaa69f; stroke-width: 2; stroke-dasharray: 1 2.500; }
.stream { fill: none; stroke: #aad3df; stroke-width: 1.8; }
.ripple { stroke: #6aa8df; stroke-width: .8; stroke-dasharray: 4 2; }
.road { fill: none; stroke: #fff; stroke-width: 3; stroke-linecap: round; stroke-linejoin: round; filter: drop-shadow(0 0 1px #999); }
.greyroad { fill: none; stroke: #e6e6e8; stroke-width: 5; stroke-linecap: round; stroke-linejoin: round; }
.dash-lane { fill: none; stroke: #dedede; stroke-width: 1.6; stroke-dasharray: 6 4; }
.path-lilac { fill: none; stroke: #dddde8; stroke-width: 6; stroke-linejoin: round; filter: drop-shadow(0 0 1px #999); }
.orange { fill: none; stroke: #fcd6a4; stroke-width: 9; stroke-linejoin: round; }
.trunk, .trunk-case, .second, .second-case { fill: none; stroke-linejoin: round; stroke-width: 8; }
.trunk { stroke: #f9b29c; stroke-linecap: round; }
.trunk-case { stroke: #dc6a4c; stroke-width: 9.400; stroke-linecap: round; }
.second { stroke: #f7fabf; }
.second-case { stroke: #98a03c; stroke-width: 9.400; }
.w2 { stroke-width: 1.6; }
.w4 { stroke-width: 3; }
.w4b { stroke-width: 4.2; }
.w6 { stroke-width: 5; }
.w6b { stroke-width: 6.2; }
.w8 { stroke-width: 7; }
.w8b { stroke-width: 8.200; }
.w9 { stroke-width: 7; }
.trunk.w9 { stroke-width: 9; }
.trunk-case.w10 { stroke-width: 10.400; }
.w10 { stroke-width: 10; }
.w11 { stroke-width: 11.200; }
.w14 { stroke-width: 14; }
.w14b { stroke-width: 15.400; }
.round { fill: #f2efe9; stroke: #f7fabf; stroke-width: 9; }
.round-case { fill: none; stroke: #98a03c; stroke-width: 10.500; }
.rb { fill: none; stroke: #fff; stroke-width: 3; filter: drop-shadow(0 0 1px #999); }
.foot { fill: none; stroke: #f98d80; stroke-width: .9; stroke-dasharray: 2 1.2; }
.foot.wide { stroke-width: 2.600; stroke-dasharray: 1 .8; }
.track { fill: none; stroke: #b3924a; stroke-width: 1; stroke-dasharray: 4 1.5 1.5 1.5; }
.boundary { fill: none; stroke: #c3aec6; stroke-width: 1.5; stroke-dasharray: 9 1.500; }
.bluedots { fill: none; stroke: #6b6bf2; stroke-width: 1; stroke-dasharray: 1.500 2; }
.grid { fill: none; stroke: #dfe2e2; stroke-opacity: .5; stroke-width: .8; }
.poi { stroke: #c77400; stroke-width: 2.6; stroke-linecap: round; }
.poi.shop { stroke: #ac39ac; }
.bluebox, .bed { fill: none; stroke: #0092da; stroke-width: 1; }
.fork, .burger { fill: none; stroke: #c77400; stroke-width: 1.3; }
.burger { stroke-width: 1.6; }
.dam { fill: none; stroke: #4179b4; stroke-width: 1.2; }
.om { fill: none; stroke: #111; stroke-width: .9; }
.darkpoi, .cave, .wheel { fill: none; stroke: #111; stroke-width: 1.1; }
.arrow { fill: none; stroke: #333; stroke-width: .8; }
.brownpoi { fill: none; stroke: #734a08; stroke-width: 1.4; }
.greenpoi { fill: none; stroke: #2c9433; stroke-width: 1.1; }
.redbox { fill: #bf0000; }
.shopbox { fill: #ac39ac; }
.tri { fill: #f2efe9; stroke: #8f9640; stroke-width: .8; }
.heli { fill: #b9a9dc; stroke: #8b75cd; stroke-width: 1; }
.bubble { fill: #fff; filter: drop-shadow(0 4px 5px rgba(0,0,0,.4)); }
.close { stroke: #757575; stroke-width: .9; }
.pin-shade { fill: #222; opacity: .3; filter: blur(5px); }
.lb { font: 9.4px "Noto Sans", sans-serif; letter-spacing: -.1px; text-anchor: middle; fill: #222; stroke: rgba(255,255,255,.55); stroke-width: 1.500px; paint-order: stroke; }
.lb.temple { fill: #3a3870; }
.lb.brown { fill: #7c5a35; }
.lb.grey { fill: #666; }
.lb.place-lb { fill: #777; font-size: 10.300px; }
.lb.hotel { fill: #2f7de8; }
.lb.food { fill: #c77400; }
.lb.admin { fill: #9180a6; }
.lb.river { fill: #4d80b3; }
.lb.resort { fill: #9c4444; font-style: italic; }
.lb.green { fill: #2e7a3a; font-style: italic; }
.lb.heli-lb { fill: #8461c4; }
.lb.blue, .pk { fill: #0092da; }
.lb.big { font-size: 13px; }
.lb.spaced { letter-spacing: .8px; }
.pk { font: 13.500px "Noto Sans", sans-serif; text-anchor: middle; }
.tip { font: 9.6px "Liberation Sans", sans-serif; fill: #333; }
```
